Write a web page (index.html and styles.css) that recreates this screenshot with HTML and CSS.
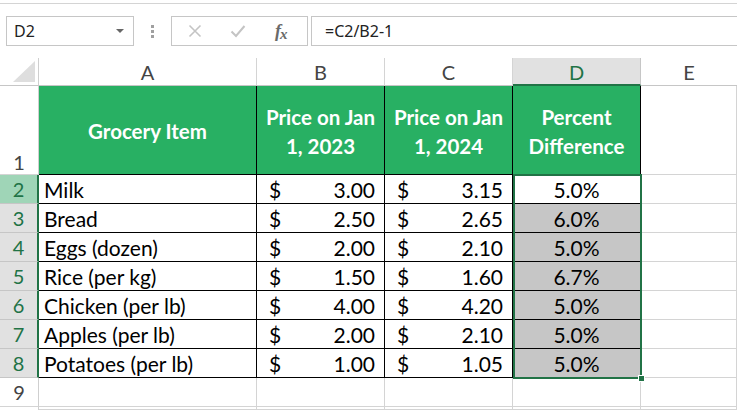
FILE: index.html
```html
<!DOCTYPE html>
<html>
<head>
<meta charset="utf-8">
<link rel="stylesheet" href="styles.css">
</head>
<body>
<div class="topstrip"></div>
<div class="fbar">
  <div class="namebox"><span>D2</span><span class="caret"></span></div>
  <div class="grip"><i></i><i></i><i></i></div>
  <div class="tools">
    <svg class="ico" width="14" height="14" viewBox="0 0 14 14"><path d="M1.5 1.5 L12.5 12.5 M12.5 1.5 L1.5 12.5" stroke="#c4c4c4" stroke-width="1.6" fill="none"/></svg>
    <svg class="ico" width="16" height="14" viewBox="0 0 16 14"><path d="M1.5 7.5 L6 12 L14.5 2" stroke="#c4c4c4" stroke-width="2" fill="none"/></svg>
    <span class="fx">f<span class="fx-x">x</span></span>
  </div>
  <div class="formula">=C2/B2-1</div>
</div>
<div class="sheet">
  <div class="corner"><svg width="22" height="21" viewBox="0 0 22 21"><polygon points="22,0 22,21 0,21" fill="#dedede"/></svg></div>
  <div class="ch">A</div>
  <div class="ch">B</div>
  <div class="ch">C</div>
  <div class="ch ch-sel">D</div>
  <div class="ch ch-e">E</div>

  <div class="rh rh-tall">1</div>
  <div class="c hd">Grocery Item</div>
  <div class="c hd">Price on Jan<br>1, 2023</div>
  <div class="c hd">Price on Jan<br>1, 2024</div>
  <div class="c hd">Percent<br>Difference</div>
  <div class="g"></div>

  <div class="rh sel act">2</div>
  <div class="c t">Milk</div>
  <div class="c m"><span>$</span><span>3.00</span></div>
  <div class="c m"><span>$</span><span>3.15</span></div>
  <div class="c p">5.0%</div>
  <div class="g"></div>

  <div class="rh sel">3</div>
  <div class="c t">Bread</div>
  <div class="c m"><span>$</span><span>2.50</span></div>
  <div class="c m"><span>$</span><span>2.65</span></div>
  <div class="c p ps">6.0%</div>
  <div class="g"></div>

  <div class="rh sel">4</div>
  <div class="c t">Eggs (dozen)</div>
  <div class="c m"><span>$</span><span>2.00</span></div>
  <div class="c m"><span>$</span><span>2.10</span></div>
  <div class="c p ps">5.0%</div>
  <div class="g"></div>

  <div class="rh sel">5</div>
  <div class="c t">Rice (per kg)</div>
  <div class="c m"><span>$</span><span>1.50</span></div>
  <div class="c m"><span>$</span><span>1.60</span></div>
  <div class="c p ps">6.7%</div>
  <div class="g"></div>

  <div class="rh sel">6</div>
  <div class="c t">Chicken (per lb)</div>
  <div class="c m"><span>$</span><span>4.00</span></div>
  <div class="c m"><span>$</span><span>4.20</span></div>
  <div class="c p ps">5.0%</div>
  <div class="g"></div>

  <div class="rh sel">7</div>
  <div class="c t">Apples (per lb)</div>
  <div class="c m"><span>$</span><span>2.00</span></div>
  <div class="c m"><span>$</span><span>2.10</span></div>
  <div class="c p ps">5.0%</div>
  <div class="g"></div>

  <div class="rh sel">8</div>
  <div class="c t">Potatoes (per lb)</div>
  <div class="c m"><span>$</span><span>1.00</span></div>
  <div class="c m"><span>$</span><span>1.05</span></div>
  <div class="c p ps">5.0%</div>
  <div class="g"></div>

  <div class="rh">9</div>
  <div class="g"></div><div class="g"></div><div class="g"></div><div class="g"></div><div class="g"></div>

  <div class="rh rh-end"></div>
  <div class="g"></div><div class="g"></div><div class="g"></div><div class="g"></div><div class="g"></div>

  <div class="selbox"><span class="handle"></span></div>
</div>
</body>
</html>
```
FILE: styles.css
```css
* { box-sizing: border-box; }
html, body { margin: 0; padding: 0; background: #fff; }
body { width: 737px; height: 410px; overflow: hidden; font-family: "Lato", "Open Sans", sans-serif; }

.topstrip { height: 4px; border-bottom: 1px solid #d4d4d4; }

.fbar { display: flex; align-items: stretch; height: 30px; margin-top: 12px; padding-left: 6px; font-family: "Noto Sans", "Open Sans", sans-serif; font-size: 16px; color: #222; }
.namebox { width: 128px; border: 1px solid #c6c6c6; display: flex; align-items: center; justify-content: space-between; padding: 0 9px 0 7px; }
.caret { width: 0; height: 0; border-left: 4px solid transparent; border-right: 4px solid transparent; border-top: 4px solid #666; }
.grip { width: 37px; display: flex; flex-direction: column; align-items: center; justify-content: center; gap: 2px; }
.grip i { display: block; width: 3px; height: 3px; background: #a0a0a0; }
.tools { width: 137px; border: 1px solid #c6c6c6; display: flex; align-items: center; padding-left: 16px; }
.tools .ico:first-child { margin-right: 28px; }
.tools .ico { display: block; }
.fx { margin-left: 29px; font-family: "Liberation Serif", serif; font-style: italic; font-weight: bold; font-size: 18px; color: #6a6a6a; }
.fx-x { font-size: 15px; position: relative; top: 2px; margin-left: -1px; }
.formula { flex: 1; margin-left: 3px; border: 1px solid #c6c6c6; border-right: none; display: flex; align-items: center; padding-left: 13px; }

.sheet { position: relative; margin-top: 12px; display: grid; grid-template-columns: 39px 218px 128px 128px 128px 1fr; grid-template-rows: 28px 89px repeat(8, 29px) 3px; }

.corner { border-right: 1px solid #cfcfcf; border-bottom: 1px solid #c6c6c6; display: flex; align-items: flex-end; justify-content: flex-end; padding: 0 3px 3px 0; }
.ch { border-right: 1px solid #d4d4d4; border-bottom: 1px solid #c6c6c6; display: flex; align-items: flex-end; justify-content: center; padding-bottom: 1px; font-size: 20px; color: #444; }
.ch-sel { background: #e1e1e1; color: #217346; border-bottom: 2px solid #217346; border-right-color: #c6c6c6; padding-bottom: 0; }
.ch-e { border-right: none; }

.rh { border-right: 1px solid #cfcfcf; border-bottom: 1px solid #d4d4d4; display: flex; align-items: center; justify-content: center; font-size: 20px; color: #444; }
.rh-tall { align-items: flex-end; padding-bottom: 0; }
.rh-end { border-bottom: none; }
.rh.sel { background: #e1e1e1; color: #217346; border-right: 2px solid #217346; border-bottom-color: #c6c6c6; }
.rh.act { background: #9fd5b7; }

.c { border-right: 1px solid #000; border-bottom: 1px solid #000; display: flex; align-items: center; font-size: 21px; color: #000; white-space: nowrap; }
.hd { background: #28b063; color: #fff; font-weight: bold; font-size: 20.5px; justify-content: center; text-align: center; line-height: 29px; padding-top: 3px; }
.t { padding-left: 5px; }
.m { justify-content: space-between; padding: 0 9px 0 12px; }
.p { justify-content: center; }
.ps { background: #c6c6c6; }
.g { border-right: 1px solid #d4d4d4; border-bottom: 1px solid #d4d4d4; }

.selbox { position: absolute; left: 513px; top: 116px; width: 129px; height: 205px; border: 2px solid #217346; pointer-events: none; }
.handle { position: absolute; right: -5px; bottom: -5px; width: 7px; height: 7px; background: #217346; border: 1px solid #fff; }
```
